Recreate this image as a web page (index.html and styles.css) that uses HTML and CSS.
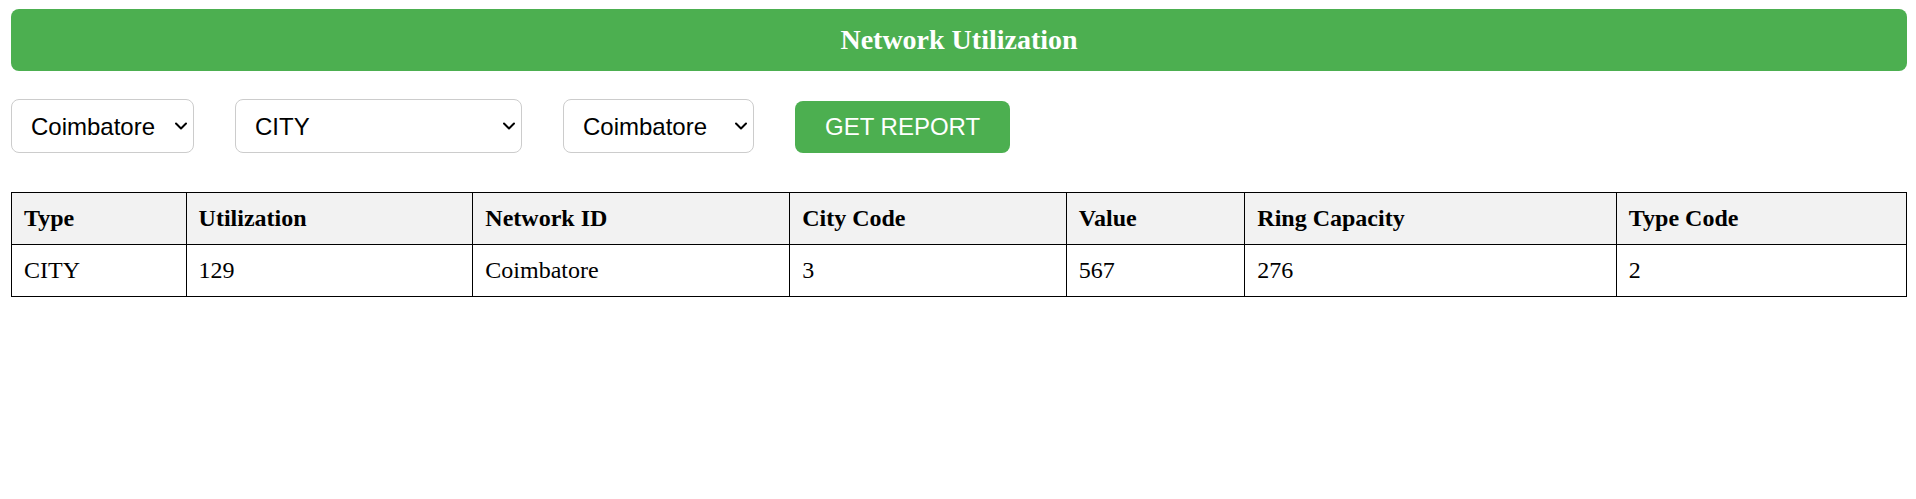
FILE: index.html
```html
<!DOCTYPE html>
<html lang="en">
<head>
<meta charset="utf-8">
<title>Network Utilization</title>
<link rel="stylesheet" href="styles.css">
</head>
<body>
  <header class="banner">
    <h3 class="banner-title">Network Utilization</h3>
  </header>

  <div class="controls">
    <div class="picker-wrap">
      <select class="picker picker-circle">
        <option>Coimbatore</option>
      </select>
      <svg class="chevron" viewBox="0 0 12 8" width="12" height="8" aria-hidden="true"><path d="M1 1.5 L6 6.5 L11 1.5" fill="none" stroke="#000" stroke-width="2" stroke-linecap="round" stroke-linejoin="round"/></svg>
    </div>
    <div class="picker-wrap">
      <select class="picker picker-type">
        <option>CITY</option>
      </select>
      <svg class="chevron" viewBox="0 0 12 8" width="12" height="8" aria-hidden="true"><path d="M1 1.5 L6 6.5 L11 1.5" fill="none" stroke="#000" stroke-width="2" stroke-linecap="round" stroke-linejoin="round"/></svg>
    </div>
    <div class="picker-wrap">
      <select class="picker picker-network">
        <option>Coimbatore</option>
      </select>
      <svg class="chevron" viewBox="0 0 12 8" width="12" height="8" aria-hidden="true"><path d="M1 1.5 L6 6.5 L11 1.5" fill="none" stroke="#000" stroke-width="2" stroke-linecap="round" stroke-linejoin="round"/></svg>
    </div>
    <button class="report-btn" type="button">GET REPORT</button>
  </div>

  <table class="report">
    <thead>
      <tr>
        <th>Type</th>
        <th>Utilization</th>
        <th>Network ID</th>
        <th>City Code</th>
        <th>Value</th>
        <th>Ring Capacity</th>
        <th>Type Code</th>
      </tr>
    </thead>
    <tbody>
      <tr>
        <td>CITY</td>
        <td>129</td>
        <td>Coimbatore</td>
        <td>3</td>
        <td>567</td>
        <td>276</td>
        <td>2</td>
      </tr>
    </tbody>
  </table>
</body>
</html>
```

FILE: styles.css
```css
html, body {
  background: #ffffff;
}

body {
  margin: 9px 9px 0 11px;
  font-family: "Liberation Serif", "Times New Roman", serif;
  font-size: 24px;
  color: #000;
}

.banner {
  background: #4caf50;
  border-radius: 8px;
  height: 62px;
  display: flex;
  align-items: center;
  justify-content: center;
}

.banner-title {
  margin: 0;
  font-family: "Liberation Serif", "Times New Roman", serif;
  font-size: 28px;
  font-weight: bold;
  color: #ffffff;
  line-height: 32px;
}

.controls {
  display: flex;
  align-items: flex-end;
  gap: 41px;
  margin-top: 28px;
}

.picker-wrap {
  position: relative;
  display: flex;
}

.picker {
  -webkit-appearance: none;
  appearance: none;
  height: 54px;
  box-sizing: border-box;
  border: 1px solid #cccccc;
  border-radius: 8px;
  background-color: #ffffff;
  font-family: "Liberation Sans", Arial, sans-serif;
  font-size: 24px;
  color: #000;
  padding: 0 24px 0 19px;
  margin: 0;
}

.picker-circle { width: 183px; }
.picker-type { width: 287px; }
.picker-network { width: 191px; }

.chevron {
  position: absolute;
  right: 7px;
  top: 23px;
  pointer-events: none;
}

.report-btn {
  height: 52px;
  box-sizing: border-box;
  padding: 0 30px;
  margin: 0;
  border: none;
  border-radius: 8px;
  background: #4caf50;
  color: #ffffff;
  font-family: "Liberation Sans", Arial, sans-serif;
  font-size: 24px;
  cursor: pointer;
}

.report {
  width: 100%;
  border-collapse: collapse;
  margin-top: 39px;
}

.report th,
.report td {
  border: 1px solid #000;
  padding: 12px;
  text-align: left;
  font-size: 24px;
}

.report th {
  background: #f2f2f2;
  font-weight: bold;
}
```
